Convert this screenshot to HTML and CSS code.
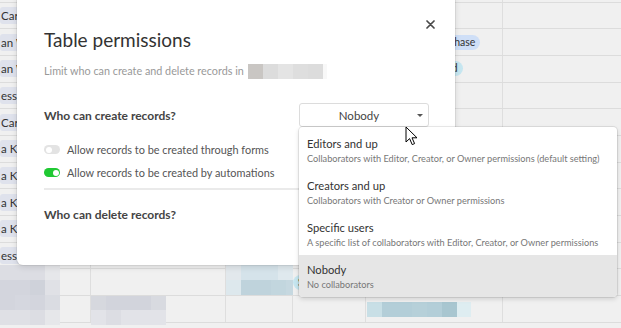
FILE: index.html
```html
<!DOCTYPE html>
<html>
<head>
<meta charset="utf-8">
<link rel="stylesheet" href="styles.css">
</head>
<body>
<div class="screen">
  <div class="table">
    <div class="row"><div class="cell c1"></div><div class="cell c2"></div><div class="cell c3"></div><div class="cell c4"></div><div class="cell c5"></div><div class="cell c6"></div></div>
    <div class="row"><div class="cell c1"><span class="pill">Carson W</span></div><div class="cell c2"></div><div class="cell c3"></div><div class="cell c4"></div><div class="cell c5"></div><div class="cell c6"></div></div>
    <div class="row"><div class="cell c1"><span class="pill">an Wells</span></div><div class="cell c2"></div><div class="cell c3"></div><div class="cell c4"></div><div class="cell c5"><span class="chip blue">Sales</span><span class="chip blue">Purchase</span></div><div class="cell c6"></div></div>
    <div class="row"><div class="cell c1"><span class="pill">an Wells</span></div><div class="cell c2"></div><div class="cell c3"></div><div class="cell c4"></div><div class="cell c5"><span class="chip cyan">Not Received</span></div><div class="cell c6"></div></div>
    <div class="row"><div class="cell c1"><span class="pill">essa</span></div><div class="cell c2"></div><div class="cell c3"></div><div class="cell c4"></div><div class="cell c5"></div><div class="cell c6"></div></div>
    <div class="row"><div class="cell c1"><span class="pill">Carson</span></div><div class="cell c2"></div><div class="cell c3"></div><div class="cell c4"></div><div class="cell c5"></div><div class="cell c6"></div></div>
    <div class="row"><div class="cell c1"><span class="pill">a Kim</span></div><div class="cell c2"></div><div class="cell c3"></div><div class="cell c4"></div><div class="cell c5"></div><div class="cell c6"></div></div>
    <div class="row"><div class="cell c1"><span class="pill">a Kim</span></div><div class="cell c2"></div><div class="cell c3"></div><div class="cell c4"></div><div class="cell c5"></div><div class="cell c6"></div></div>
    <div class="row"><div class="cell c1"><span class="pill">a Kim</span></div><div class="cell c2"></div><div class="cell c3"></div><div class="cell c4"></div><div class="cell c5"></div><div class="cell c6"></div></div>
    <div class="row"><div class="cell c1"><span class="pill">a Kim</span></div><div class="cell c2"></div><div class="cell c3"></div><div class="cell c4"></div><div class="cell c5"></div><div class="cell c6"></div></div>
    <div class="row"><div class="cell c1"><span class="pill">essa</span></div><div class="cell c2"></div><div class="cell c3"></div><div class="cell c4"></div><div class="cell c5"></div><div class="cell c6"></div></div>
    <div class="row"><div class="cell c1"></div><div class="cell c2"></div><div class="cell c3"></div><div class="cell c4"><span class="chip cyan">S</span></div><div class="cell c5"></div><div class="cell c6"></div></div>
    <div class="row"><div class="cell c1"></div><div class="cell c2"></div><div class="cell c3"></div><div class="cell c4"></div><div class="cell c5"></div><div class="cell c6"></div></div>
  </div>

  <div class="redact ra"></div>
  <div class="redact rb"></div>
  <div class="redact rc"></div>
  <div class="redact rd"></div>

  <div class="modal">
    <div class="modal-head">
      <h1 class="title">Table permissions</h1>
      <svg class="close" width="9" height="9" viewBox="0 0 9 9"><path d="M1 1L8 8M8 1L1 8" stroke="#4a4a4a" stroke-width="1.7" stroke-linecap="round"/></svg>
    </div>
    <p class="subtitle">Limit who can create and delete records in <span class="blurname"></span></p>

    <div class="perm-row">
      <span class="label">Who can create records?</span>
      <div class="select"><span>Nobody</span><span class="caret"></span></div>
    </div>
    <div class="toggle-row"><span class="toggle off"></span><span>Allow records to be created through forms</span></div>
    <div class="toggle-row"><span class="toggle on"></span><span>Allow records to be created by automations</span></div>
    <div class="divider"></div>
    <div class="perm-row">
      <span class="label">Who can delete records?</span>
      <div class="select"><span>Editors and up</span><span class="caret"></span></div>
    </div>
  </div>

  <div class="menu">
    <div class="item"><div class="item-title">Editors and up</div><div class="item-desc">Collaborators with Editor, Creator, or Owner permissions (default setting)</div></div>
    <div class="item"><div class="item-title">Creators and up</div><div class="item-desc">Collaborators with Creator or Owner permissions</div></div>
    <div class="item"><div class="item-title">Specific users</div><div class="item-desc">A specific list of collaborators with Editor, Creator, or Owner permissions</div></div>
    <div class="item selected"><div class="item-title">Nobody</div><div class="item-desc">No collaborators</div></div>
  </div>

  <svg class="cursor" width="14" height="21" viewBox="0 0 14 21"><path d="M1 1L1 16L4.6 12.6L7.2 18.6L9.6 17.6L7 11.8L12 11.8Z" fill="#fff" stroke="#000" stroke-width="1" stroke-linejoin="round"/></svg>
</div>
</body>
</html>
```
FILE: styles.css
```css
* { box-sizing: border-box; }
html, body { margin: 0; padding: 0; }
body { font-family: "Lato", "Segoe UI", "Noto Sans", sans-serif; color: #333; }

.screen {
  position: relative;
  width: 621px;
  height: 328px;
  overflow: hidden;
  background: #f0f0f0;
}

/* background grid */
.table { display: flex; flex-direction: column; margin-top: -24px; }
.row { display: flex; height: 26.67px; border-bottom: 1px solid #dcdcdc; flex: none; }
.cell { display: flex; align-items: center; border-right: 1px solid #dedede; overflow: hidden; white-space: nowrap; font-size: 11px; }
.c1 { width: 91px; }
.c2 { width: 135px; }
.c3 { width: 67px; }
.c4 { width: 73px; }
.c5 { width: 137px; padding-left: 25px; gap: 4px; }
.c6 { flex: 1; border-right: none; }
.pill { background: #dfe2ec; height: 17px; line-height: 17px; padding: 0 6px 0 1px; border-radius: 3px; color: #333; font-size: 11.5px; }
.chip { height: 15px; line-height: 15px; padding: 0 5px; border-radius: 8px; color: #333; font-size: 10.5px; }
.chip.blue { background: #cfdff7; }
.chip.cyan { background: #c6e6f0; }

.redact { position: absolute; }
.ra { left: 0; top: 265px; width: 60px; height: 60px;
  background:
    linear-gradient(90deg, #dcdde3 0 45px, #e6e7ea 45px) 0 0 / 60px 15px no-repeat,
    linear-gradient(90deg, #d3d5dd 0 30px, #cfd2da 30px 45px, #e0e1e6 45px) 0 15px / 60px 15px no-repeat,
    linear-gradient(90deg, #d3d5dd 0 15px, #d5d7df 15px 30px, #d3d5dd 30px 45px, #dadce2 45px) 0 30px / 60px 15px no-repeat,
    linear-gradient(90deg, #dfe0e5 0 30px, #dcdde3 30px 45px, #e6e7ea 45px) 0 45px / 60px 15px no-repeat;
}
.rb { left: 91px; top: 296px; width: 75px; height: 29px;
  background:
    linear-gradient(90deg, #d6d8de 0 15px, #d2d4dc 15px 60px, #d8dae0 60px) 0 0 / 75px 14px no-repeat,
    linear-gradient(90deg, #e2e3e8 0 15px, #dcdde3 15px 30px, #e2e3e8 30px) 0 14px / 75px 15px no-repeat;
}
.rc { left: 226px; top: 265px; width: 67px; height: 30px;
  background:
    linear-gradient(90deg, #e2e8ec 0 15px, #d5e3ea 15px 52px, #dfe9ee 52px) 0 0 / 67px 15px no-repeat,
    linear-gradient(90deg, #dde8ed 0 15px, #bfd3dc 15px 45px, #c2d6de 45px 60px, #c6d8e0 60px) 0 15px / 67px 15px no-repeat;
}
.rd { left: 367px; top: 302px; width: 104px; height: 15px;
  background: linear-gradient(90deg, #c8dfe6 0 15px, #b3ced8 15px 45px, #b6d0d9 45px 60px, #b3ced8 60px 75px, #a8c6d0 75px 90px, #deedf1 90px);
}

/* modal */
.modal {
  position: absolute;
  left: 17px; top: -6px;
  width: 438px; height: 271px;
  background: #fff;
  border-radius: 6px;
  box-shadow: 0 0 0 1px rgba(0,0,0,0.06), 0 2px 6px rgba(0,0,0,0.12);
  padding: 33px 26px 0 27px;
}
.modal-head { display: flex; justify-content: space-between; align-items: flex-start; }
.title { margin: 0; font-size: 19px; font-weight: 400; line-height: 26px; color: #333; }
.close { margin-top: -7px; margin-right: -6px; }
.subtitle { margin: 10px 0 0; font-size: 10.8px; line-height: 16px; color: #999; display: flex; align-items: center; }
.blurname { display: inline-block; width: 79px; height: 15px; margin-left: 4px;
  background: linear-gradient(90deg, #c9c6c3 0 15px, #dcdcdc 15px 30px, #e4e4e4 30px 45px, #dedede 45px 60px, #dcdcdc 60px 75px, #f8f8f8 75px);
}
.perm-row { display: flex; justify-content: space-between; align-items: center; margin-top: 24px; }
.label { font-size: 12px; font-weight: 700; color: #444; }
.select {
  width: 130px; height: 24px;
  border: 1px solid #dcdcdc; border-radius: 3px;
  display: flex; align-items: center; justify-content: center;
  padding-right: 10px;
  position: relative; font-size: 11.5px; color: #444;
}
.caret { position: absolute; right: 5px; top: 10px; width: 0; height: 0;
  border-left: 3px solid transparent; border-right: 3px solid transparent; border-top: 3.5px solid #555; }
.toggle-row { display: flex; align-items: center; gap: 7px; font-size: 10.9px; color: #555; height: 23px; }
.perm-row + .toggle-row { margin-top: 11px; }
.toggle { width: 16px; height: 9px; border-radius: 5px; position: relative; flex: none; }
.toggle::after { content: ""; position: absolute; top: 1.5px; width: 6px; height: 6px; border-radius: 50%; background: #fff; }
.toggle.off { background: #e3e3e3; }
.toggle.off::after { left: 1.5px; }
.toggle.on { background: #20c933; }
.toggle.on::after { right: 1.5px; }
.divider { height: 2px; background: #eaeaea; margin-top: 4px; }
.divider + .perm-row { margin-top: 12px; }

/* menu */
.menu {
  position: absolute;
  left: 299px; top: 127px;
  width: 318px;
  background: #fff;
  border-radius: 4px;
  box-shadow: 0 0 0 1px rgba(0,0,0,0.08), 0 2px 5px rgba(0,0,0,0.14);
  overflow: hidden;
  padding-top: 2px;
}
.item { padding: 7px 8px 5px; height: 42px; }
.item.selected { background: #e6e6e6; }
.item-title { font-size: 11.2px; line-height: 16px; color: #333; }
.item-desc { font-size: 9.2px; line-height: 14px; color: #777; white-space: nowrap; }

.cursor { position: absolute; left: 405px; top: 126px; }
```
